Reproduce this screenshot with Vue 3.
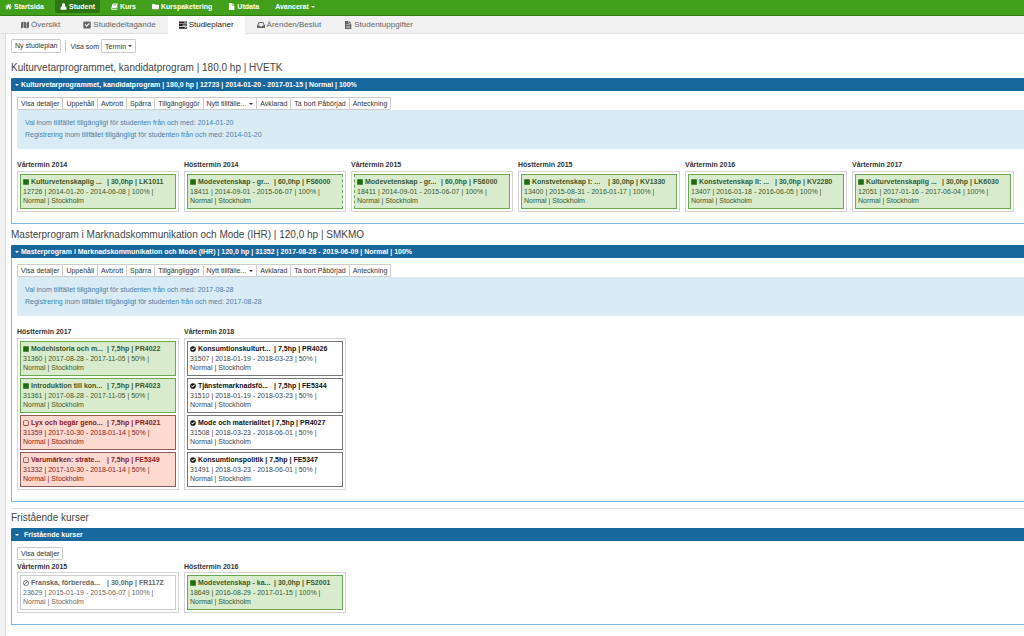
<script setup>
import { ref } from 'vue'

const icons = {
  home: 'M8 1.5 0.5 8.2l1 1L8 3.6l6.5 5.6 1-1-2.4-2.1V2.2h-2v2.1ZM8 4.8 2.8 9.2V14.5H6.7v-4h2.6v4h3.9V9.2Z',
  user: 'M8 0.5a3.6 3.8 0 0 1 2.6 6.6C13.5 8 15 10.500 15 13.200 15 15 14 15.500 12.800 15.500H3.200C2 15.500 1 15 1 13.200 1 10.500 2.500 8 5.400 7.100A3.600 3.800 0 0 1 8 0.500Z',
  book: 'M5 1H15.500L12.500 12H3.200c-1 0-1 1.600 0 1.600H13l2-7 .8.8-2.400 8.100H3C0.600 15.500 0 13.500 0.700 11.500L3.200 3C3.600 1.600 4 1 5 1ZM6.200 3.400 5.900 4.500H12l.3-1.100ZM5.500 6 5.200 7.100h6.100l.3-1.100Z',
  folder: 'M1.500 2H6.500L8 4H14.500C15.500 4 16 4.500 16 5.500V12.500C16 13.500 15.500 14 14.500 14H1.500C0.500 14 0 13.500 0 12.500V3.500C0 2.500 0.500 2 1.500 2Z',
  file: 'M2 0H9V5.500H14.500V16H2ZM10.200 0.200 14.300 4.300H10.200Z',
  map: 'M0 3 4.600 1V13L0 15ZM5.600 1 10.400 3V15L5.600 13ZM11.400 3 16 1V13L11.400 15Z',
  check: 'M3 1H13C14.500 1 15.500 2 15.500 3.500V12.500C15.500 14 14.500 15 13 15H3C1.500 15 0.500 14 0.500 12.500V3.500C0.500 2 1.500 1 3 1ZM3.500 7.500 7.300 11.800 13.200 5.800 11.500 4.100 7.300 8.400 5.200 5.900Z',
  tasks: 'M0 1H16V5H0ZM10 2.300V3.700H15V2.300ZM0 6.200H16V10.200H0ZM7 7.500V8.900H15V7.500ZM0 11.400H16V15.400H0ZM11.500 12.700V14.100H15V12.700Z',
  inbox: 'M3.500 2H12.500L16 9V14H0V9ZM4.700 3.800 2.200 9H5.200L6.400 11H9.600L10.800 9H13.800L11.300 3.800Z',
  doc: 'M2 0H9V5H14.500V16H2ZM10.200 0.200 14.300 4.200H10.200ZM4.500 7V8.200H12V7ZM4.500 9.800V11H12V9.800ZM4.500 12.500V13.700H12V12.500Z',
  square: 'M2 0.500H14C15 0.500 15.500 1 15.500 2V14C15.500 15 15 15.500 14 15.500H2C1 15.500 0.500 15 0.500 14V2C0.500 1 1 0.500 2 0.500Z',
  empty: 'M3 1H13C14.300 1 15 1.700 15 3V13C15 14.300 14.300 15 13 15H3C1.700 15 1 14.300 1 13V3C1 1.700 1.700 1 3 1ZM2.700 2.700V13.300H13.300V2.700Z',
  done: 'M8 0.500A7.500 7.500 0 1 1 8 15.500 7.500 7.500 0 1 1 8 0.500ZM3 8.200 7 12.200 13.200 6 11.500 4.300 7 8.800 4.700 6.500Z',
  ban: 'M8 0.500A7.500 7.500 0 1 1 8 15.500 7.500 7.500 0 1 1 8 0.500ZM8 2.500A5.500 5.500 0 0 0 3.500 11.200L11.200 3.500A5.500 5.500 0 0 0 8 2.500ZM12.500 4.800 4.800 12.500A5.500 5.500 0 0 0 12.500 4.800Z'
}

const nav = [
  { icon: 'home', text: 'Startsida' },
  { icon: 'user', text: 'Student', active: true },
  { icon: 'book', text: 'Kurs' },
  { icon: 'folder', text: 'Kurspaketering' },
  { icon: 'file', text: 'Utdata' },
  { text: 'Avancerat', menu: true }
]
const tabs = [
  { icon: 'map', text: 'Översikt' },
  { icon: 'check', text: 'Studiedeltagande' },
  { icon: 'tasks', text: 'Studieplaner', active: true },
  { icon: 'inbox', text: 'Ärenden/Beslut' },
  { icon: 'doc', text: 'Studentuppgifter' }
]

const course = (status, name, hp, code, id, period, pace, edge = '') => ({
  status, name, hp, code, id, period, pace, edge
})
const statusIcon = { read: 'square', missing: 'empty', current: 'done', cancelled: 'ban' }

const actions = ['Visa detaljer', 'Uppehåll', 'Avbrott', 'Spärra', 'Tillgängliggör', 'Nytt tillfälle...', 'Avklarad', 'Ta bort Påbörjad', 'Anteckning']

const sections = ref([
  {
    heading: 'Kulturvetarprogrammet, kandidatprogram | 180,0 hp | HVETK',
    title: 'Kulturvetarprogrammet, kandidatprogram | 180,0 hp | 12723 | 2014-01-20 - 2017-01-15 | Normal | 100%',
    open: true,
    actions,
    date: '2014-01-20',
    terms: [
      { name: 'Vårtermin 2014', courses: [course('read', 'Kulturvetenskaplig ...', '30,0hp', 'LK1011', '12726', '2014-01-20 - 2014-06-08', '100%')] },
      { name: 'Hösttermin 2014', courses: [course('read', 'Modevetenskap - gr...', '60,0hp', 'FS6000', '18411', '2014-09-01 - 2015-06-07', '100%', 'open-right')] },
      { name: 'Vårtermin 2015', courses: [course('read', 'Modevetenskap - gr...', '60,0hp', 'FS6000', '18411', '2014-09-01 - 2015-06-07', '100%', 'open-left')] },
      { name: 'Hösttermin 2015', courses: [course('read', 'Konstvetenskap I: ...', '30,0hp', 'KV1330', '13400', '2015-08-31 - 2016-01-17', '100%')] },
      { name: 'Vårtermin 2016', courses: [course('read', 'Konstvetenskap II: ...', '30,0hp', 'KV2280', '13407', '2016-01-18 - 2016-06-05', '100%')] },
      { name: 'Vårtermin 2017', courses: [course('read', 'Kulturvetenskaplig ...', '30,0hp', 'LK6030', '12051', '2017-01-16 - 2017-06-04', '100%')] }
    ]
  },
  {
    heading: 'Masterprogram i Marknadskommunikation och Mode (IHR) | 120,0 hp | SMKMO',
    title: 'Masterprogram i Marknadskommunikation och Mode (IHR) | 120,0 hp | 31352 | 2017-08-28 - 2019-06-09 | Normal | 100%',
    open: true,
    actions,
    date: '2017-08-28',
    terms: [
      {
        name: 'Hösttermin 2017',
        courses: [
          course('read', 'Modehistoria och m...', '7,5hp', 'PR4022', '31360', '2017-08-28 - 2017-11-05', '50%'),
          course('read', 'Introduktion till kon...', '7,5hp', 'PR4023', '31361', '2017-08-28 - 2017-11-05', '50%'),
          course('missing', 'Lyx och begär geno...', '7,5hp', 'PR4021', '31359', '2017-10-30 - 2018-01-14', '50%'),
          course('missing', 'Varumärken: strate...', '7,5hp', 'FE5349', '31332', '2017-10-30 - 2018-01-14', '50%')
        ]
      },
      {
        name: 'Vårtermin 2018',
        courses: [
          course('current', 'Konsumtionskulturt...', '7,5hp', 'PR4026', '31507', '2018-01-19 - 2018-03-23', '50%'),
          course('current', 'Tjänstemarknadsfö...', '7,5hp', 'FE5344', '31510', '2018-01-19 - 2018-03-23', '50%'),
          course('current', 'Mode och materialitet', '7,5hp', 'PR4027', '31508', '2018-03-23 - 2018-06-01', '50%'),
          course('current', 'Konsumtionspolitik', '7,5hp', 'FE5347', '31491', '2018-03-23 - 2018-06-01', '50%')
        ]
      }
    ]
  },
  {
    heading: 'Fristående kurser',
    title: 'Fristående kurser',
    open: true,
    separate: true,
    actions: ['Visa detaljer'],
    terms: [
      { name: 'Vårtermin 2015', courses: [course('cancelled', 'Franska, förbereda...', '30,0hp', 'FR117Z', '23629', '2015-01-19 - 2015-06-07', '100%')] },
      { name: 'Hösttermin 2016', courses: [course('read', 'Modevetenskap - ka...', '30,0hp', 'FS2001', '18649', '2016-08-29 - 2017-01-15', '100%')] }
    ]
  }
])
</script>

<template>
  <div class="page">
    <nav class="navbar">
      <a v-for="n in nav" :key="n.text" href="#" class="nav-item" :class="{ active: n.active }">
        <svg v-if="n.icon" class="icon" viewBox="0 0 16 16" aria-hidden="true"><path fill-rule="evenodd" :d="icons[n.icon]" /></svg>
        <span>{{ n.text }}</span>
        <i v-if="n.menu" class="caret"></i>
      </a>
    </nav>

    <nav class="tabs">
      <a v-for="t in tabs" :key="t.text" href="#" class="tab" :class="{ active: t.active }">
        <svg class="tab-icon" viewBox="0 0 16 16" aria-hidden="true"><path fill-rule="evenodd" :d="icons[t.icon]" /></svg>
        <span>{{ t.text }}</span>
      </a>
    </nav>

    <main class="content">
      <div class="toolbar">
        <button type="button" class="btn">Ny studieplan</button>
        <div class="view">
          <label for="view-as">Visa som</label>
          <span class="select-wrap">
            <select id="view-as"><option>Termin</option></select>
            <i class="caret select-caret"></i>
          </span>
        </div>
      </div>

      <section v-for="s in sections" :key="s.heading" class="plan" :class="{ separate: s.separate }">
        <h2>{{ s.heading }}</h2>
        <div class="panel">
          <button type="button" class="panel-head" :aria-expanded="s.open" @click="s.open = !s.open">
            <i class="caret"></i><span>{{ s.title }}</span>
          </button>
          <div v-if="s.open" class="panel-body">
            <div class="btn-group">
              <button v-for="a in s.actions" :key="a" type="button" class="btn">
                {{ a }}<i v-if="a.startsWith('Nytt')" class="caret"></i>
              </button>
            </div>
            <div v-if="s.date" class="info">
              <p>Val inom tillfället tillgängligt för studenten från och med: {{ s.date }}</p>
              <p>Registrering inom tillfället tillgängligt för studenten från och med: {{ s.date }}</p>
            </div>
            <div class="terms">
              <div v-for="t in s.terms" :key="t.name" class="term">
                <h3>{{ t.name }}</h3>
                <div class="term-box">
                  <article v-for="c in t.courses" :key="c.id" class="card" :class="[c.status, c.edge]">
                    <div class="card-title">
                      <svg class="status" viewBox="0 0 16 16" aria-hidden="true"><path fill-rule="evenodd" :d="icons[statusIcon[c.status]]" /></svg>
                      <span class="name" :class="{ cut: c.name.endsWith('...') }">{{ c.name }}</span>
                      <span>| {{ c.hp }} | {{ c.code }}</span>
                    </div>
                    <p>{{ c.id }} | {{ c.period }} | {{ c.pace }} |<br />Normal | Stockholm</p>
                  </article>
                </div>
              </div>
            </div>
          </div>
        </div>
      </section>
    </main>
  </div>
</template>

<style>
body {
  margin: 0;
  background: #f1f1f1;
  overflow-x: hidden;
}
</style>

<style scoped>
.page {
  min-height: 100vh;
  display: flex;
  flex-direction: column;
  font-family: "Liberation Sans", Arial, sans-serif;
  font-size: 7px;
  color: #333;
}
h2, h3, p { margin: 0; }
a { text-decoration: none; }
button, select { font: inherit; }
svg { fill: currentColor; flex: none; }
.caret {
  display: inline-block;
  border: 2px solid transparent;
  border-top-color: currentColor;
  border-bottom: 0;
}

.navbar {
  display: flex;
  gap: 6px;
  height: 15px;
  background: #429f1b;
  border-bottom: 1px solid #2f7d10;
}
.nav-item {
  display: flex;
  align-items: center;
  gap: 2px;
  height: 13px;
  padding: 0 5px;
  border-radius: 0 0 2px 2px;
  color: #fff;
  font-weight: bold;
  line-height: 12px;
}
.nav-item.active { background: #2c7512; }
.icon { width: 7px; height: 7px; }

.tabs {
  display: flex;
  gap: 1px;
  height: 17px;
  padding-left: 10px;
  background: #f1f1f1;
  border-bottom: 1px solid #e0e0e0;
}
.tab {
  display: flex;
  align-items: center;
  gap: 2px;
  height: 18px;
  padding: 0 11px 1px;
  box-sizing: border-box;
  font-size: 8px;
  line-height: 12px;
  color: #666;
}
.tab.active { background: #fff; color: #222; }
.tab-icon { width: 8px; height: 8px; }

.content {
  flex: 1;
  margin-left: 5px;
  padding: 5px 0 11px 5px;
  border-left: 1px solid #ddd;
  background: #fff;
}
.toolbar { display: flex; align-items: center; height: 14px; gap: 4px; }
.btn {
  height: 14px;
  padding: 0 3px;
  border: 1px solid #ccc;
  border-radius: 1px;
  background: #fff;
  color: #333;
  line-height: 12px;
  white-space: nowrap;
}
.btn .caret { margin: 0 0 1px 3px; }
.view {
  display: flex;
  align-items: center;
  gap: 2px;
  height: 12px;
  padding-left: 4px;
  border-left: 1px solid #ccc;
}
.select-wrap { position: relative; display: inline-flex; }
select {
  appearance: none;
  height: 14px;
  padding: 0 8px 0 3px;
  border: 1px solid #ccc;
  border-radius: 1px;
  background: #fff;
  color: #333;
}
.select-caret { position: absolute; right: 4px; top: 6px; pointer-events: none; }

.plan h2 {
  padding: 5px 0 4px;
  font-size: 10px;
  font-weight: normal;
  line-height: 12px;
  color: #444;
}
.toolbar + .plan h2 { padding-top: 9px; }
.plan.separate { margin-top: 6px; border-top: 1px solid #ddd; }
.plan.separate h2 { padding-top: 3px; }

.panel {
  border: 1px solid #7ab8e0;
  border-right: 0;
  border-top: 0;
}
.panel-head {
  display: flex;
  align-items: center;
  gap: 2px;
  width: calc(100% + 1px);
  height: 13px;
  margin-left: -1px;
  padding: 0 4px;
  border: 0;
  border-radius: 2px 0 0 0;
  background: #1868a0;
  color: #fff;
  font-weight: bold;
  line-height: 12px;
  text-align: left;
}
.separate .panel-head { gap: 5px; }
.panel-body { padding: 6px 0 11px 5px; }
.btn-group { display: flex; height: 13px; }
.btn-group .btn { height: 13px; line-height: 11px; }
.btn-group .btn + .btn { margin-left: -1px; }

.info {
  padding: 7px 8px 8px;
  margin-bottom: 10px;
  border-radius: 0 0 0 2px;
  background: #d9ebf5;
  color: #4a7fa5;
  line-height: 12px;
}
.terms { display: flex; gap: 5px; }
.separate .terms { margin-top: 1px; }
.term { flex: none; width: 162px; }
.term h3 { font-size: 7px; line-height: 11px; margin-bottom: 1px; }
.separate .term h3 { margin-bottom: 0; }
.term-box {
  display: flex;
  flex-direction: column;
  gap: 2px;
  padding: 2px;
  border: 1px solid #d4d4d4;
}
.card {
  padding: 2px 2px 3px;
  border: 1px solid #777;
  line-height: 9px;
  color: #444;
  white-space: nowrap;
}
.card-title {
  display: flex;
  align-items: center;
  gap: 2px;
  font-weight: bold;
  line-height: 10px;
}
.status { width: 6px; height: 6px; }
.name.cut { min-width: 74px; }
.read { border-color: #6aa84f; background: #d9ebcd; color: #3a5a2e; }
.read .status { color: #1f6b12; }
.open-right { border-right-style: dashed; }
.open-left { border-left-style: dashed; }
.missing { border-color: #8f5a5a; background: #fdd9d0; color: #8a2020; }
.current .card-title { color: #111; }
.cancelled { border-color: #ccc; color: #666; }
</style>
